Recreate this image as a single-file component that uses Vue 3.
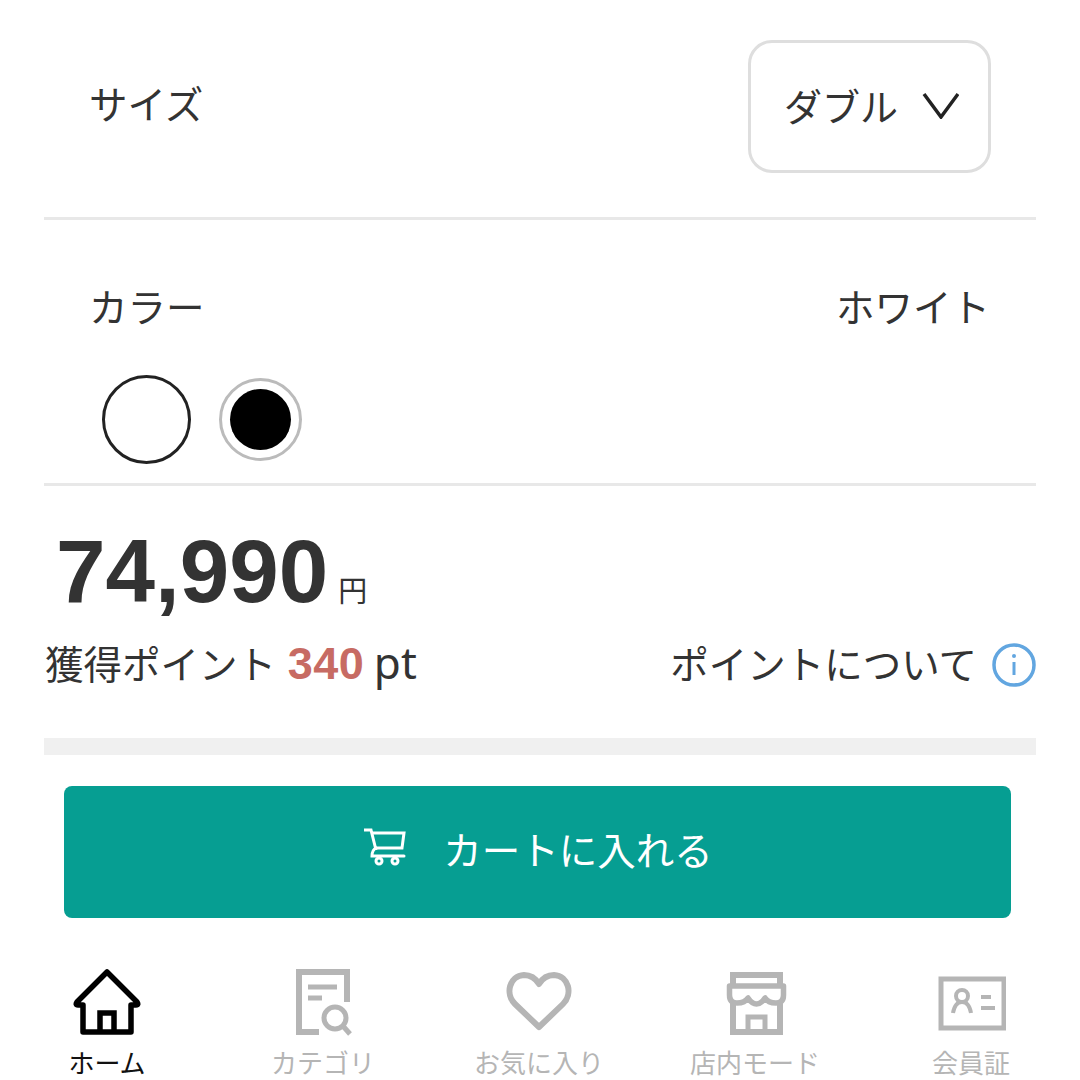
<template>
  <div class="page">
    <div class="size-row">
      <span class="label">サイズ</span>
      <div class="select">
        <span class="select-text">ダブル</span>
        <svg class="chevron" width="38" height="28" viewBox="0 0 38 28">
          <path d="M3 3 L20 26 L37 3" fill="none" stroke="#222" stroke-width="3.5" />
        </svg>
      </div>
    </div>
    <div class="line"></div>

    <div class="color-head">
      <span class="label">カラー</span>
      <span class="color-name">ホワイト</span>
    </div>
    <div class="swatches">
      <div class="swatch-white"></div>
      <div class="swatch-black"><div class="swatch-dot"></div></div>
    </div>
    <div class="line"></div>

    <div class="price">
      <span class="price-num">74,990</span>
      <span class="price-yen">円</span>
    </div>
    <div class="points">
      <div>獲得ポイント <b class="pt-num">340</b> <span class="pt-unit">pt</span></div>
      <div class="about">
        <span>ポイントについて</span>
        <svg class="info" width="44" height="44" viewBox="0 0 44 44">
          <circle cx="22" cy="22" r="20" fill="none" stroke="#62a6e0" stroke-width="3.5" />
          <circle cx="22" cy="13" r="2" fill="#62a6e0" />
          <path d="M22 19 V32" stroke="#62a6e0" stroke-width="3" />
        </svg>
      </div>
    </div>
    <div class="band"></div>

    <div class="cart-btn">
      <svg class="cart-icon" width="46" height="40" viewBox="0 0 46 40">
        <g fill="none" stroke="#fff" stroke-width="3">
          <path d="M2 2 H9 L14 22" />
          <path d="M10 5 H42 L40 20 H14" />
          <path d="M14 20 Q10 22 10 28 H42" stroke-linecap="round" />
          <circle cx="17" cy="33" r="3" />
          <circle cx="33" cy="33" r="3" />
        </g>
      </svg>
      <span class="cart-text">カートに入れる</span>
    </div>

    <div class="tabs">
      <div v-for="tab in tabs" :key="tab.name" class="tab" :class="{ active: tab.active }">
        <svg width="70" height="70" viewBox="0 0 70 70" fill="none" :stroke="tab.active ? '#000' : '#b5b5b5'">
          <template v-if="tab.icon === 'home'">
            <path d="M11 65 H59 V38 H64 Q67 38 65 35 L35 5 L5 35 Q3 38 6 38 H11 Z" stroke-width="5.5" stroke-linejoin="round" />
            <path d="M28 65 V46 H42 V65" stroke-width="5.5" />
          </template>
          <g v-else-if="tab.icon === 'doc'" transform="translate(7 0)">
            <path d="M52 35 V5 H4 V65 H24" stroke-width="6" />
            <path d="M13 20 H42 M13 31 H27" stroke-width="5" />
            <circle cx="40" cy="51" r="11" stroke-width="5" />
            <path d="M48 59 L55 67" stroke-width="5" />
          </g>
          <template v-else-if="tab.icon === 'heart'">
            <path d="M35 60 L11 37 C1 27 5 9 20 8 C27 8 32 12 35 17 C38 12 43 8 50 8 C65 9 69 27 59 37 Z" stroke-width="6" stroke-linejoin="round" />
          </template>
          <template v-else-if="tab.icon === 'shop'">
            <path d="M13 20 V8 H60 V20" stroke-width="6" />
            <path d="M9.5 19 H63.5 V28 Q63.5 36 56 36 Q48 36 45 31 Q41 37 36.5 37 Q32 37 28 31 Q25 36 17 36 Q9.5 36 9.5 28 Z" stroke-width="5.5" stroke-linejoin="round" />
            <path d="M13 36 V65 H60 V36" stroke-width="6" />
            <path d="M28 65 V50 H45 V65" stroke-width="5" />
          </template>
          <g v-else transform="translate(2 0)">
            <rect x="3" y="12" width="63" height="49" stroke-width="5" />
            <circle cx="24" cy="29" r="6" stroke-width="4" />
            <path d="M15 46 Q17 35 24 35 Q31 35 33 46" stroke-width="4" />
            <path d="M43 30 H53" stroke-width="4" />
            <path d="M43 41 H57" stroke-width="4" />
          </g>
        </svg>
        <span class="tab-name">{{ tab.name }}</span>
      </div>
    </div>
  </div>
</template>

<script setup>
const tabs = [
  { name: 'ホーム', icon: 'home', active: true },
  { name: 'カテゴリ', icon: 'doc' },
  { name: 'お気に入り', icon: 'heart' },
  { name: '店内モード', icon: 'shop' },
  { name: '会員証', icon: 'id' }
]
</script>

<style>
html, body {
  margin: 0;
  background: #fff;
  overflow: hidden;
}
</style>

<style scoped>
.page {
  width: 1080px;
  height: 1080px;
  overflow: hidden;
  font-family: "Noto Sans CJK JP", "Liberation Sans", sans-serif;
  font-size: 38.5px;
  color: #333;
}

.size-row {
  height: 217px;
  display: flex;
  justify-content: space-between;
  padding: 40px 89px 0 89px;
  box-sizing: border-box;
}

.label {
  line-height: 52px;
  margin-top: 36px;
}

.select {
  width: 243px;
  height: 133px;
  box-sizing: border-box;
  border: 3px solid #dedede;
  border-radius: 24px;
  display: flex;
  align-items: center;
  padding-left: 33px;
  gap: 23px;
}

.select-text {
  font-size: 38px;
  margin-top: -4px;
}

.chevron {
  margin-top: -4px;
}

.line {
  height: 3px;
  margin: 0 44px;
  background: #e8e8e8;
}

.color-head {
  display: flex;
  justify-content: space-between;
  padding: 59px 90px 0 89px;
  height: 52px;
  line-height: 52px;
}

.color-head .label {
  margin-top: 0;
}

.swatches {
  display: flex;
  align-items: center;
  gap: 28px;
  padding: 44px 0 19px 102px;
}

.swatch-white {
  width: 89px;
  height: 89px;
  box-sizing: border-box;
  border: 3px solid #222;
  border-radius: 50%;
}

.swatch-black {
  width: 83px;
  height: 83px;
  box-sizing: border-box;
  border: 3px solid #bbb;
  border-radius: 50%;
  display: flex;
  align-items: center;
  justify-content: center;
}

.swatch-dot {
  width: 61px;
  height: 61px;
  border-radius: 50%;
  background: #000;
}

.price {
  display: flex;
  align-items: baseline;
  padding: 35px 0 0 56px;
  height: 99px;
}

.price-num {
  font-family: "Liberation Sans", sans-serif;
  font-weight: 700;
  font-size: 89px;
  line-height: 100px;
}

.price-yen {
  font-size: 29px;
  margin-left: 10px;
}

.points {
  display: flex;
  justify-content: space-between;
  align-items: center;
  margin: 12px 44px 0 45px;
  height: 60px;
}

.pt-num {
  font-family: "Liberation Sans", sans-serif;
  font-size: 45px;
  letter-spacing: 0.5px;
  margin-left: 3px;
  color: #c76b63;
}

.pt-unit {
  font-family: "Noto Sans", sans-serif;
  font-size: 44px;
  margin-left: 1px;
}

.about {
  display: flex;
  align-items: center;
  gap: 15px;
}

.info {
  margin-top: 6px;
}

.band {
  height: 17px;
  margin: 46px 44px 0;
  background: #f0f0f0;
}

.cart-btn {
  height: 132px;
  margin: 31px 69px 0 64px;
  background: #069e92;
  border-radius: 8px;
  color: #fff;
  display: flex;
  align-items: center;
  justify-content: center;
  gap: 35px;
}

.cart-icon,
.cart-text {
  margin-top: -8px;
}

.tabs {
  display: flex;
  margin: 49px 0 0 -1px;
}

.tab {
  width: 216px;
  display: flex;
  flex-direction: column;
  align-items: center;
  color: #b5b5b5;
}

.tab.active {
  color: #111;
}

.tab-name {
  font-size: 26px;
  line-height: 36px;
  margin-top: 7px;
}
</style>
